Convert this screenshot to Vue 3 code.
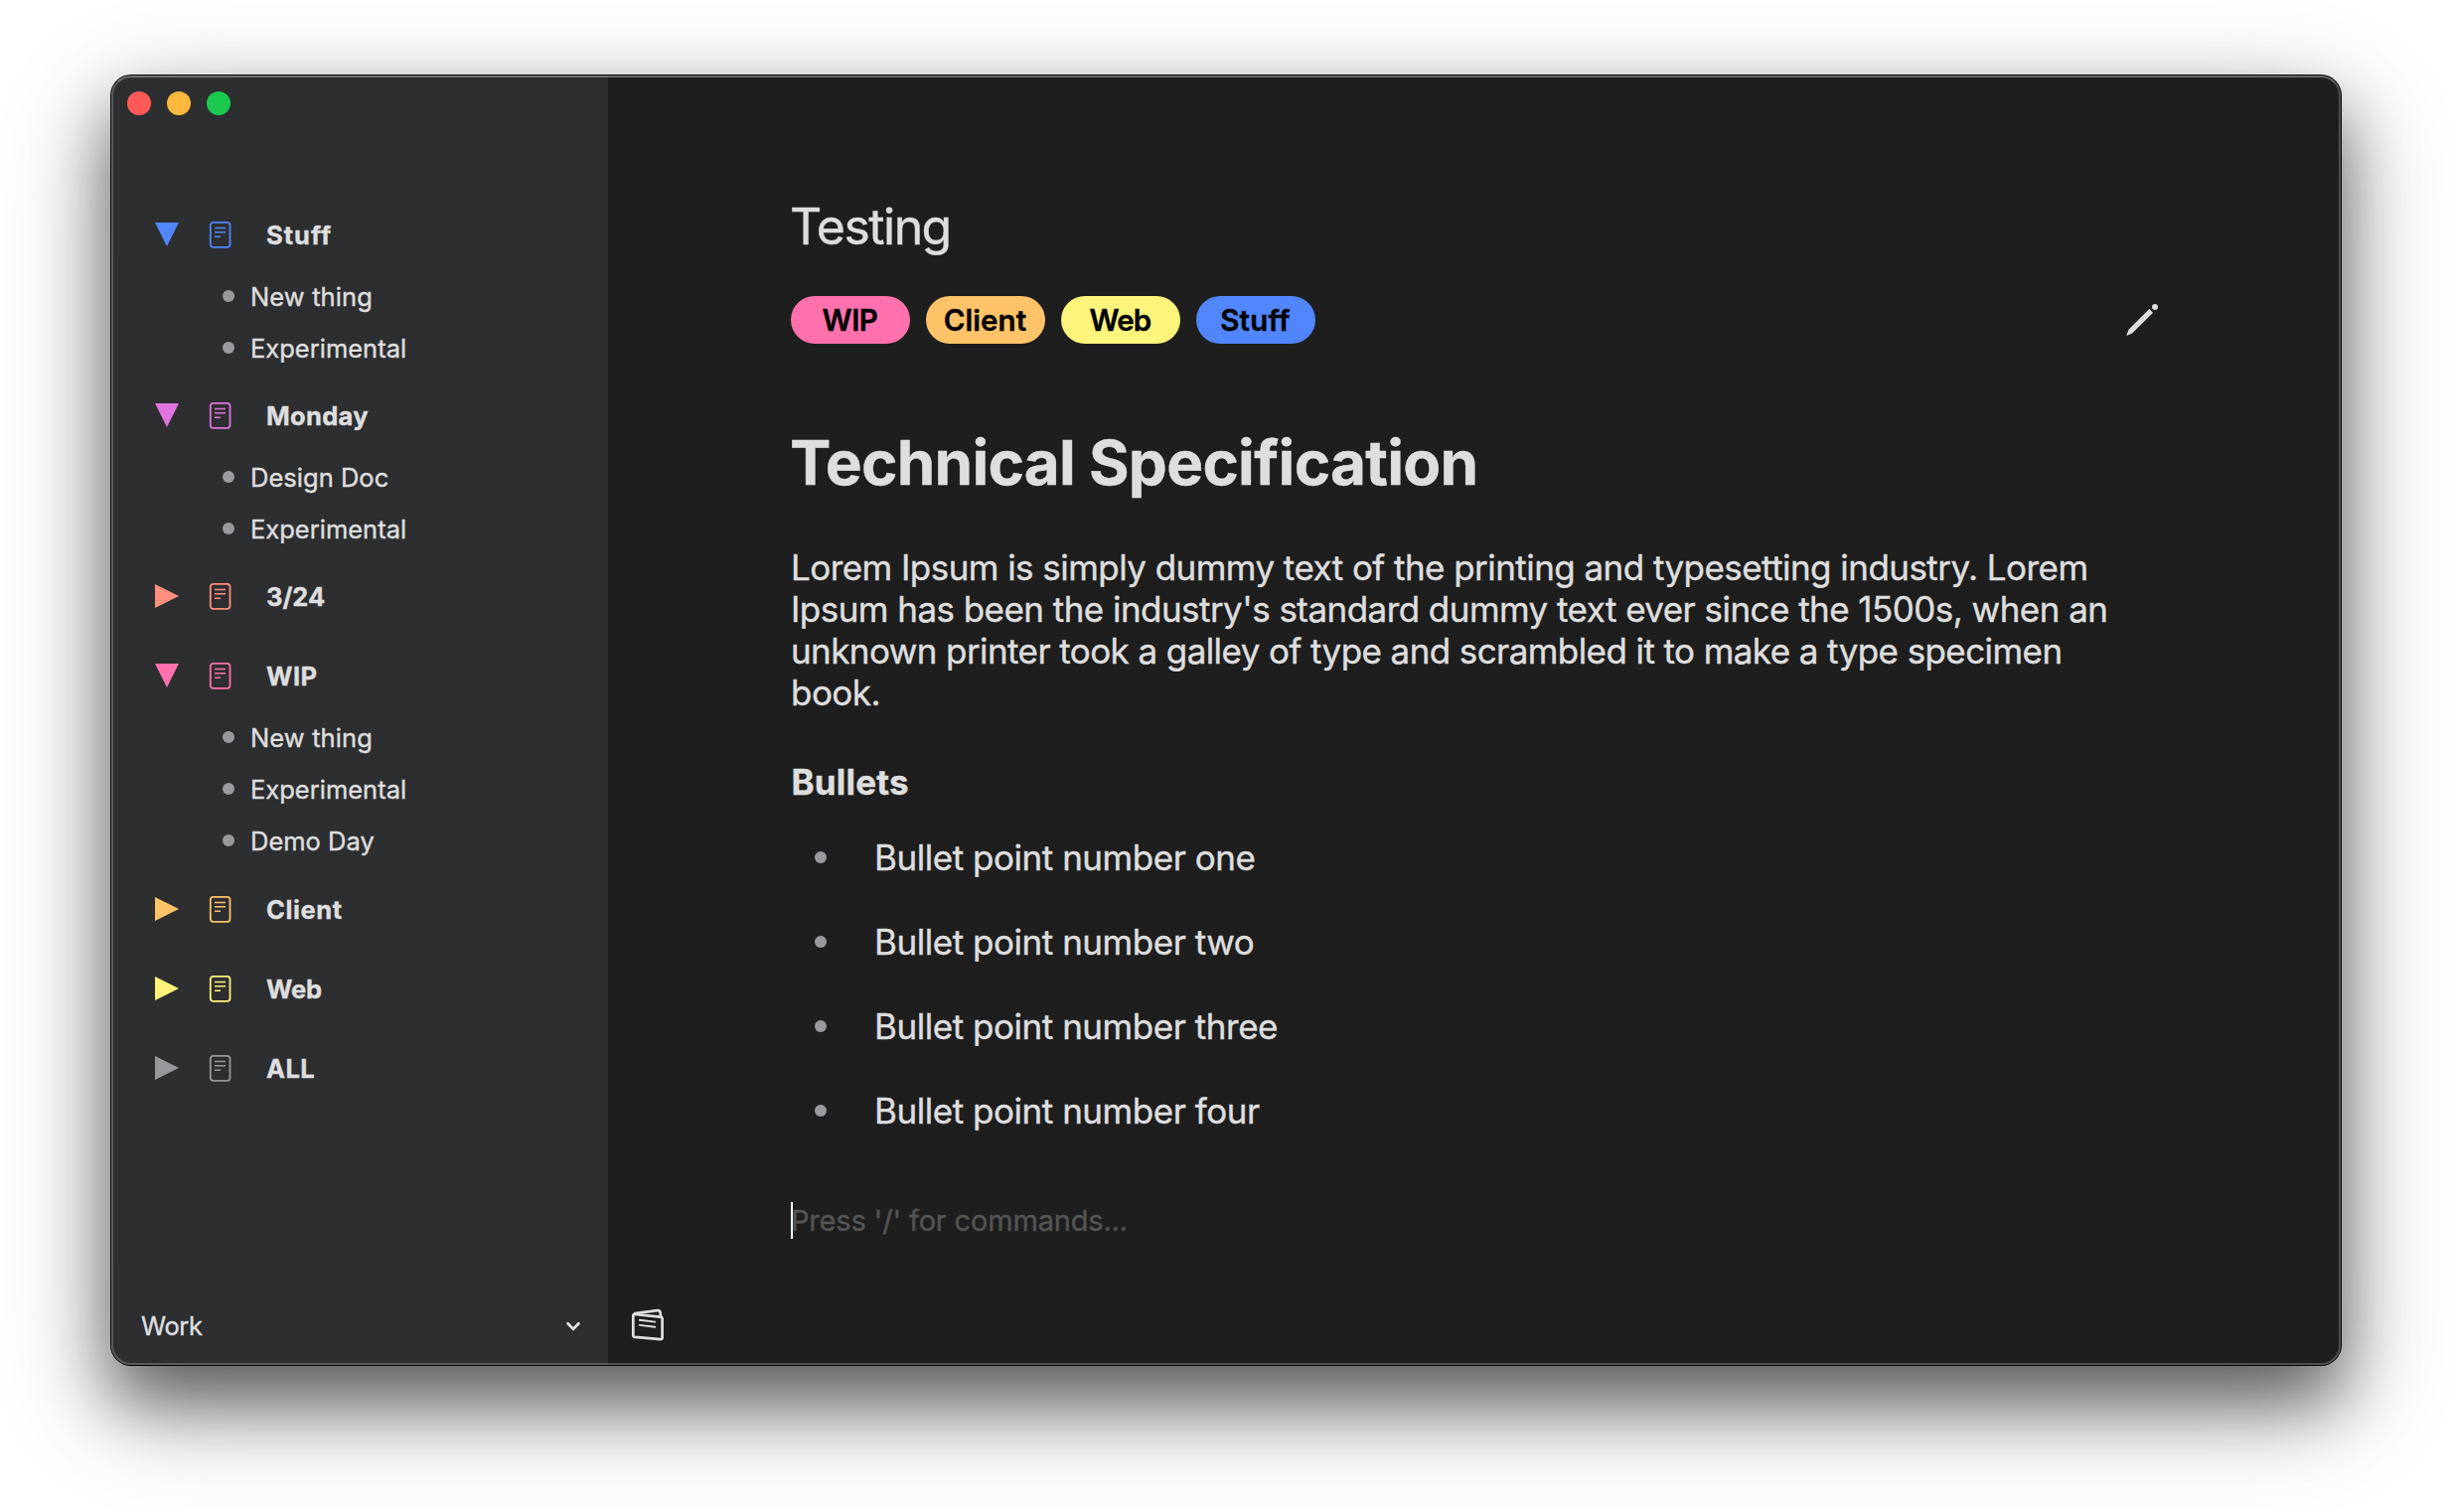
<script setup>
const sections = [
  { name: 'Stuff', color: '#5186fd', tracking: 1.0, open: true, items: [{ name: 'New thing', tracking: 0.12 }, { name: 'Experimental', tracking: 0 }] },
  { name: 'Monday', color: '#e073df', tracking: 0.3, open: true, items: [{ name: 'Design Doc', tracking: 0.02 }, { name: 'Experimental', tracking: 0 }] },
  { name: '3/24', color: '#ff907d', tracking: 0, open: false, items: [] },
  { name: 'WIP', color: '#ff71ad', tracking: 0.5, open: true, items: [{ name: 'New thing', tracking: 0.12 }, { name: 'Experimental', tracking: 0 }, { name: 'Demo Day', tracking: 0 }] },
  { name: 'Client', color: '#ffc469', tracking: 0.6, open: false, items: [] },
  { name: 'Web', color: '#fef479', tracking: -0.2, open: false, items: [] },
  { name: 'ALL', color: '#98979c', tracking: 0.4, open: false, items: [] }
]

const tags = [
  { name: 'WIP', color: '#ff71ad', tracking: -0.5 },
  { name: 'Client', color: '#ffc469', tracking: 0.05 },
  { name: 'Web', color: '#fdf57b', tracking: -0.9 },
  { name: 'Stuff', color: '#5186fd', tracking: 0.27 }
]

const lines = [
  { text: 'Lorem Ipsum is simply dummy text of the printing and typesetting industry. Lorem', tracking: -0.55 },
  { text: "Ipsum has been the industry's standard dummy text ever since the 1500s, when an", tracking: -0.545 },
  { text: 'unknown printer took a galley of type and scrambled it to make a type specimen', tracking: -0.586 },
  { text: 'book.', tracking: -0.55 }
]

const bullets = ['one', 'two', 'three', 'four']
const spacing = (v) => ({ letterSpacing: v + 'px' })
</script>

<template>
  <div class="desktop">
    <div class="window">
      <aside class="sidebar">
        <div class="lights">
          <span class="light close"></span>
          <span class="light minimize"></span>
          <span class="light maximize"></span>
        </div>

        <nav class="sections">
          <section v-for="s in sections" :key="s.name">
            <div class="head">
              <svg class="arrow" viewBox="0 0 24 24" :fill="s.color">
                <path v-if="s.open" d="M0 0H24L12 24Z" />
                <path v-else d="M0 0L24 12L0 24Z" />
              </svg>
              <svg class="note" viewBox="0 0 24 28" fill="none" :stroke="s.color" stroke-width="1.8">
                <rect x="1.8" y="1.8" width="19.7" height="25.1" rx="2.8" />
                <path d="M6 7.4H17M6 11.8H17M6 16.3H12" stroke-width="1.5" />
              </svg>
              <span class="label bold" :style="spacing(s.tracking)">{{ s.name }}</span>
            </div>
            <ul v-if="s.open" class="items">
              <li v-for="i in s.items" :key="i.name">
                <span class="dot"></span>
                <span class="label" :style="spacing(i.tracking)">{{ i.name }}</span>
              </li>
            </ul>
          </section>
        </nav>

        <div class="workspace">
          <span class="label work">Work</span>
          <svg class="chevron" viewBox="0 0 16 12" fill="none" stroke="#e2e2e2" stroke-width="2.8" stroke-linecap="round" stroke-linejoin="round">
            <path d="M2.6 3.2L8 8.9L13.4 3.2" />
          </svg>
        </div>
      </aside>

      <main class="main">
        <article class="doc">
          <div class="title">Testing</div>
          <div class="tagbar">
            <div class="tags">
              <span v-for="t in tags" :key="t.name" class="tag" :style="{ background: t.color, letterSpacing: t.tracking + 'px' }">{{ t.name }}</span>
            </div>
            <svg class="pencil" viewBox="0 0 32 32" fill="#dedede">
              <path d="M0.2 31.9L2.5 25.8L23.3 5L27 8.7L6.2 29.5Z" />
              <circle cx="29" cy="3.1" r="3" />
            </svg>
          </div>

          <h1>Technical Specification</h1>
          <p class="para">
            <span v-for="l in lines" :key="l.text" class="line" :style="spacing(l.tracking)">{{ l.text }}</span>
          </p>
          <h2>Bullets</h2>
          <ul class="bullets">
            <li v-for="b in bullets" :key="b">
              <span class="dot"></span>
              <span>Bullet point number {{ b }}</span>
            </li>
          </ul>
          <div class="prompt"><span class="caret"></span>Press '/' for commands...</div>
        </article>

        <div class="toolbar">
          <svg class="cards" viewBox="0 0 36 36" fill="none" stroke="#e0e0e0" stroke-width="2.7" stroke-linejoin="round" stroke-linecap="round">
            <path d="M4.9 7L30.8 9.7Q32.6 9.9 32.6 11.7V30.4Q32.6 32.4 30.7 32.2L5 29.9Q3.3 29.7 3.3 28V8.6Q3.3 6.8 4.9 7Z" />
            <path d="M4.9 6.2L27.6 3.2Q30.3 2.9 30.6 5.4L31 8.8" />
            <path d="M9.8 12.8L25.2 14.6M9.8 17.9L25.2 19.7" stroke-width="1.9" />
          </svg>
        </div>
      </main>
    </div>
  </div>
</template>

<style>
body {
  margin: 0;
  background: #fff;
}
</style>

<style scoped>
.desktop {
  box-sizing: border-box;
  width: 2468px;
  height: 1522px;
  padding: 76px 112px 148px;
  overflow: hidden;
  background: #fff;
  font-family: Inter, "Liberation Sans", sans-serif;
  color: #dedede;
  -webkit-text-stroke: 0.4px currentColor;
}
.window {
  position: relative;
  display: flex;
  height: 1298px;
  border-radius: 20px;
  background: #1e1e1e;
  box-shadow: 0 0 0 1px #050505, 0 37px 68px rgba(0, 0, 0, 0.5), 0 37px 115px rgba(0, 0, 0, 0.3);
}
.window::after {
  content: "";
  position: absolute;
  inset: 0;
  border: 2px solid rgba(255, 255, 255, 0.22);
  border-top-color: rgba(255, 255, 255, 0.32);
  border-radius: 20px;
  pointer-events: none;
}
ul {
  list-style: none;
  margin: 0;
  padding: 0;
}
.sidebar {
  display: flex;
  flex-direction: column;
  width: 500px;
  flex: none;
  background: #2d2e30;
  border-radius: 20px 0 0 20px;
}
.lights {
  display: flex;
  gap: 16px;
  padding: 16px;
}
.light {
  width: 24px;
  height: 24px;
  border-radius: 50%;
}
.close { background: #ff5a58; }
.minimize { background: #ffb83e; }
.maximize { background: #1ac84e; }

.sections {
  margin-top: 64px;
}
.head {
  display: flex;
  align-items: center;
  height: 80px;
  padding-left: 44px;
}
.arrow {
  width: 24px;
  height: 24px;
}
.note {
  width: 24px;
  height: 28px;
  margin: 0 34px 0 30px;
}
.label {
  margin-top: 1px;
  font-size: 25.5px;
  line-height: 31px;
  white-space: nowrap;
}
.bold {
  font-weight: 700;
}
.items {
  margin: -4px 0 2px;
}
.items li {
  display: flex;
  align-items: center;
  gap: 16px;
  height: 52px;
  padding-left: 112px;
}
.items li:last-child:nth-child(3) {
  margin-bottom: 3px;
}
.sections section:first-child .items {
  margin-top: -5px;
}
.sections section:first-child li:first-child {
  height: 53px;
}
.dot {
  width: 12px;
  height: 12px;
  flex: none;
  border-radius: 50%;
  background: #9a999e;
}
.workspace {
  display: flex;
  align-items: center;
  justify-content: space-between;
  margin-top: auto;
  padding: 0 27px 24px 30px;
}
.work {
  margin: 0;
  letter-spacing: -0.4px;
}
.chevron {
  width: 16px;
  height: 12px;
}

.main {
  display: flex;
  flex-direction: column;
  justify-content: space-between;
  flex: 1;
}
.doc {
  width: 1376px;
  padding: 122px 0 0 184px;
}
.title {
  margin-left: -1px;
  font-size: 50px;
  line-height: 60px;
  letter-spacing: -1.55px;
}
.tagbar {
  display: flex;
  align-items: center;
  justify-content: space-between;
  margin-top: 40px;
}
.tags {
  display: flex;
  gap: 16px;
}
.tag {
  box-sizing: border-box;
  width: 120px;
  height: 48px;
  padding: 6px 1px 6px 0;
  border-radius: 24px;
  color: #000;
  font-size: 29.5px;
  font-weight: 600;
  line-height: 36px;
  text-align: center;
}
.pencil {
  width: 32px;
  height: 32px;
}
h1 {
  margin: 82px 0 0 -1px;
  font-size: 62px;
  font-weight: 700;
  line-height: 75px;
  letter-spacing: -0.75px;
}
.para {
  margin: 47px 0 0;
  font-size: 35px;
  line-height: 42px;
}
.line {
  display: block;
  white-space: nowrap;
}
h2 {
  margin: 48px 0 0 0.5px;
  font-size: 35px;
  font-weight: 700;
  line-height: 42px;
  letter-spacing: 0.2px;
}
.bullets {
  display: flex;
  flex-direction: column;
  gap: 43px;
  margin-top: 34px;
  font-size: 35px;
  line-height: 42px;
  letter-spacing: -0.46px;
}
.bullets li {
  display: flex;
  align-items: center;
  gap: 48px;
  padding-left: 24px;
}
.prompt {
  position: relative;
  margin-top: 71px;
  font-size: 29px;
  line-height: 37px;
  letter-spacing: -0.17px;
  color: #545454;
}
.caret {
  position: absolute;
  left: 0;
  top: 0;
  width: 2px;
  height: 37px;
  background: #fff;
}
.toolbar {
  display: flex;
  padding: 0 22px 22px;
}
.cards {
  width: 36px;
  height: 36px;
}
</style>
